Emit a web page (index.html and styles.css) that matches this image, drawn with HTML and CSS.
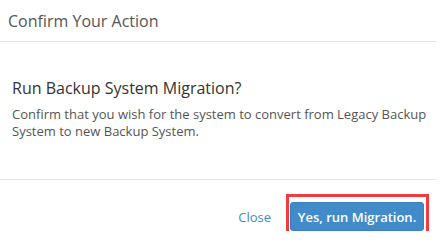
FILE: index.html
```html
<!DOCTYPE html>
<html lang="en">
<head>
<meta charset="utf-8">
<title>Confirm Your Action</title>
<link rel="stylesheet" href="styles.css">
</head>
<body>
<div class="modal">
  <div class="modal-header">
    <h4 class="modal-title">Confirm Your Action</h4>
  </div>
  <div class="modal-body">
    <h3>Run Backup System Migration?</h3>
    <p>Confirm that you wish for the system to convert from Legacy Backup System to new Backup System.</p>
  </div>
  <div class="modal-footer">
    <a class="close" href="#">Close</a>
    <span class="highlight">
      <button type="button" class="btn-primary">Yes, run Migration.</button>
    </span>
  </div>
</div>
</body>
</html>
```

FILE: styles.css
```css
body {
  margin: 0;
  font-family: "Open Sans", sans-serif;
  color: #333;
  background: #fff;
}
.modal {
  width: 436px;
}
.modal-header {
  height: 42px;
  padding: 0 8px;
  display: flex;
  align-items: center;
  border-bottom: 1px solid #e5e5e5;
  box-sizing: border-box;
}
.modal-title {
  margin: 0;
  font-size: 16px;
  font-weight: normal;
  color: #555;
}
.modal-body {
  height: 138px;
  padding: 35px 6px 0 12px;
  box-sizing: border-box;
  border-bottom: 1px solid #e5e5e5;
}
.modal-body h3 {
  margin: 0 0 7px;
  font-size: 16px;
  font-weight: normal;
  line-height: 22px;
  color: #333;
}
.modal-body p {
  margin: 0;
  font-size: 13px;
  line-height: 17px;
  color: #555;
}
.modal-footer {
  display: flex;
  justify-content: flex-end;
  align-items: center;
  gap: 19px;
  padding: 22px 12px 0;
}
a.close {
  font-size: 13px;
  color: #428bca;
  text-decoration: none;
}
.highlight {
  position: relative;
  display: inline-block;
}
.highlight::after {
  content: "";
  position: absolute;
  left: -4px;
  top: -8px;
  right: -5px;
  bottom: -4px;
  border: 3px solid #f23b3f;
}
.btn-primary {
  display: block;
  width: 134px;
  height: 29px;
  padding: 0;
  border: 1px solid #3b7fbf;
  border-radius: 3px;
  background: #428bca;
  color: #fff;
  font-family: "Open Sans", sans-serif;
  font-size: 13px;
  font-weight: 600;
}
```
